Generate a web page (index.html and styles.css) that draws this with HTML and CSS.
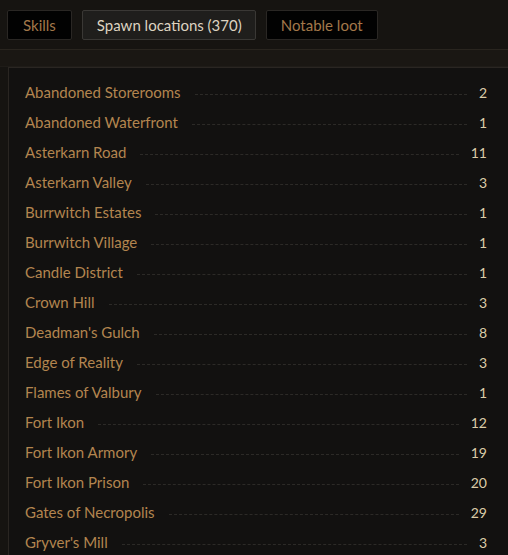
FILE: index.html
```html
<!DOCTYPE html>
<html>
<head>
<meta charset="utf-8">
<link rel="stylesheet" href="styles.css">
</head>
<body>
<div class="header">
  <div class="tab">Skills</div>
  <div class="tab active">Spawn locations (370)</div>
  <div class="tab">Notable loot</div>
</div>
<div class="band"></div>
<div class="panel">
  <div class="row"><span class="name">Abandoned Storerooms</span><span class="dots"></span><span class="num">2</span></div>
  <div class="row"><span class="name">Abandoned Waterfront</span><span class="dots"></span><span class="num">1</span></div>
  <div class="row"><span class="name">Asterkarn Road</span><span class="dots"></span><span class="num">11</span></div>
  <div class="row"><span class="name">Asterkarn Valley</span><span class="dots"></span><span class="num">3</span></div>
  <div class="row"><span class="name">Burrwitch Estates</span><span class="dots"></span><span class="num">1</span></div>
  <div class="row"><span class="name">Burrwitch Village</span><span class="dots"></span><span class="num">1</span></div>
  <div class="row"><span class="name">Candle District</span><span class="dots"></span><span class="num">1</span></div>
  <div class="row"><span class="name">Crown Hill</span><span class="dots"></span><span class="num">3</span></div>
  <div class="row"><span class="name">Deadman's Gulch</span><span class="dots"></span><span class="num">8</span></div>
  <div class="row"><span class="name">Edge of Reality</span><span class="dots"></span><span class="num">3</span></div>
  <div class="row"><span class="name">Flames of Valbury</span><span class="dots"></span><span class="num">1</span></div>
  <div class="row"><span class="name">Fort Ikon</span><span class="dots"></span><span class="num">12</span></div>
  <div class="row"><span class="name">Fort Ikon Armory</span><span class="dots"></span><span class="num">19</span></div>
  <div class="row"><span class="name">Fort Ikon Prison</span><span class="dots"></span><span class="num">20</span></div>
  <div class="row"><span class="name">Gates of Necropolis</span><span class="dots"></span><span class="num">29</span></div>
  <div class="row"><span class="name">Gryver's Mill</span><span class="dots"></span><span class="num">3</span></div>
</div>
</body>
</html>
```
FILE: styles.css
```css
html, body {
  margin: 0;
  padding: 0;
  background: #161411;
  overflow: hidden;
  font-family: "Lato", "Open Sans", sans-serif;
}
.header {
  display: flex;
  gap: 10px;
  padding: 10px 7px 9px;
  border-bottom: 1px solid #29251f;
}
.tab {
  height: 30px;
  box-sizing: border-box;
  display: flex;
  align-items: center;
  padding: 0 14px;
  border: 1px solid #2a2724;
  border-radius: 2px;
  background: #020202;
  color: #a3784a;
  font-size: 15px;
}
.tab:first-child {
  padding: 0 15px;
}
.tab.active {
  background: #1f1e1c;
  border-color: #3a3835;
  color: #ddd3c0;
  padding: 0 13px 0 14px;
}
.band {
  height: 16px;
  background: #1a1713;
  border-bottom: 1px solid #1f1c18;
}
.panel {
  margin-left: 8px;
  background: #121110;
  border: 1px solid #2a2622;
  border-right: none;
  padding: 9px 21px 10px 16px;
}
.row {
  height: 30px;
  display: flex;
  align-items: center;
}
.name {
  color: #b3854f;
  font-size: 15px;
  white-space: nowrap;
}
.dots {
  flex: 1;
  margin: 4px 12px 0 14px;
  border-bottom: 1px dashed #2c2a27;
}
.num {
  color: #dccca8;
  font-size: 14px;
}
```
